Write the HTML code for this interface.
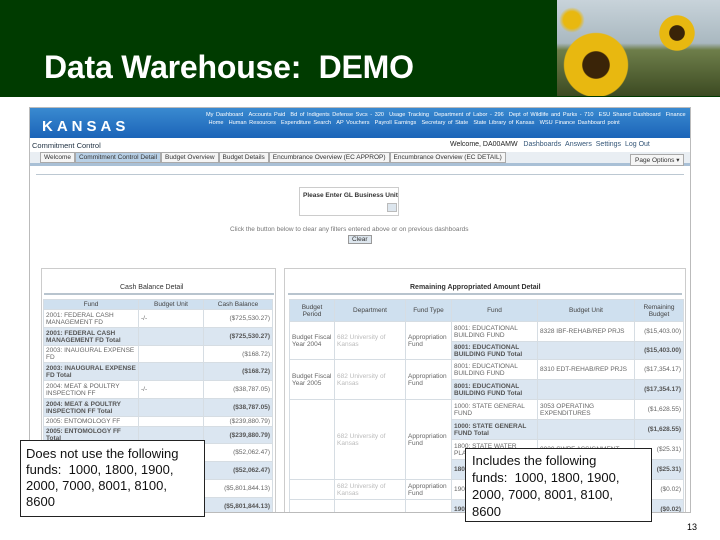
<!DOCTYPE html>
<html><head><meta charset="utf-8"><style>
*{margin:0;padding:0;box-sizing:border-box}
body{width:720px;height:540px;overflow:hidden;background:#fff;position:relative;font-family:"Liberation Sans",sans-serif}
.a{position:absolute}
.hdr{left:0;top:0;width:720px;height:97px;background:#003b00}
.title{left:44px;top:49px;color:#fff;font-size:32px;font-weight:bold;letter-spacing:-0.2px;white-space:nowrap}
.photo{left:557px;top:0;width:163px;height:96px;background:linear-gradient(180deg,#c8d3da 0%,#a9b8c0 45%,#6e7e4a 52%,#3c4a22 100%);overflow:hidden}
.shot{left:29px;top:107px;width:662px;height:406px;border:1px solid #bbb;background:#fff;overflow:hidden}
.ban{left:0;top:0;width:662px;height:30px;background:linear-gradient(180deg,#3a8ad0,#1b64b8)}
.ks{left:12px;top:10px;color:#fff;font-size:15px;font-weight:bold;letter-spacing:4px}
.nav{left:176px;top:3px;width:480px;color:#fff;font-size:5.6px;line-height:8px;word-spacing:1px}
.sm{font-size:7px;color:#333}
table{border-collapse:collapse;font-size:6.5px;color:#666}
td,th{border:1px solid #d6dde3;padding:1px 2px;vertical-align:middle}
th{background:#cfe0ef;font-weight:normal;color:#444;text-align:center}
.b td.h{background:#dbe6f1;color:#555;font-weight:bold}
.r{text-align:right}
.call{background:#fff;border:1px solid #222;font-size:13px;line-height:16px;color:#111;padding:4px 5px}
</style></head><body>
<div class="a hdr"></div>
<div class="a photo">
 <div class="a" style="left:2px;top:30px;width:74px;height:70px;border-radius:50%;background:radial-gradient(circle,#3a2408 0 26%,#e8b810 28% 62%,transparent 64%)"></div>
 <div class="a" style="left:100px;top:12px;width:40px;height:42px;border-radius:50%;background:radial-gradient(circle,#3a2408 0 26%,#e8b810 28% 60%,transparent 62%)"></div>
 <div class="a" style="left:0;top:5px;width:30px;height:30px;background:radial-gradient(circle,#e8b810 0 40%,transparent 60%)"></div>
</div>
<div class="a title">Data Warehouse:&nbsp; DEMO</div>

<div class="a shot">
 <div class="a ban"><div class="a ks">KANSAS</div>
  <div class="a nav">My Dashboard &nbsp;Accounts Paid &nbsp;Bd of Indigents Defense Svcs - 320 &nbsp;Usage Tracking &nbsp;Department of Labor - 296 &nbsp;Dept of Wildlife and Parks - 710 &nbsp;ESU Shared Dashboard &nbsp;Finance &nbsp;Home &nbsp;Human Resources &nbsp;Expenditure Search &nbsp;AP Vouchers &nbsp;Payroll Earnings &nbsp;Secretary of State &nbsp;State Library of Kansas &nbsp;WSU Finance Dashboard point</div></div>
 <div class="a sm" style="left:2px;top:33px;font-size:7.5px;color:#234">Commitment Control</div>
 <div class="a sm" style="left:420px;top:33px;color:#222">Welcome, DA00AMW &nbsp;&nbsp;<span style="color:#357">Dashboards &nbsp;Answers &nbsp;Settings &nbsp;Log Out</span></div>
 <div class="a" style="left:0;top:44px;width:662px;height:14px;background:#e9eef3;border-bottom:3px solid #a9c0d6"></div>
 <div class="a sm" style="left:10px;top:46px;font-size:6.5px;white-space:nowrap">
  <span style="border:1px solid #aaa;padding:1px 3px;background:#f5f5f5">Welcome</span><span style="border:1px solid #aaa;padding:1px 3px;background:#b8d0e6">Commitment Control Detail</span><span style="border:1px solid #aaa;padding:1px 3px;background:#f5f5f5">Budget Overview</span><span style="border:1px solid #aaa;padding:1px 3px;background:#f5f5f5">Budget Details</span><span style="border:1px solid #aaa;padding:1px 3px;background:#f5f5f5">Encumbrance Overview (EC APPROP)</span><span style="border:1px solid #aaa;padding:1px 3px;background:#f5f5f5">Encumbrance Overview (EC DETAIL)</span></div>
 <div class="a sm" style="left:600px;top:46px;border:1px solid #aaa;padding:1px 4px;font-size:6.5px;background:#f5f5f5">Page Options ▾</div>
 <div class="a" style="left:6px;top:66px;width:648px;height:1px;background:#bcc8d2"></div>
 <div class="a" style="left:269px;top:79px;width:100px;height:29px;border:1px solid #ccc"></div>
 <div class="a sm" style="left:273px;top:84px;font-size:6.5px;font-weight:bold">Please Enter GL Business Unit</div>
 <div class="a" style="left:357px;top:95px;width:10px;height:9px;background:#dde6ee;border:1px solid #bbb"></div>
 <div class="a sm" style="left:200px;top:118px;font-size:6.5px;color:#777">Click the button below to clear any filters entered above or on previous dashboards</div>
 <div class="a sm" style="left:318px;top:127px;border:1px solid #999;padding:0 3px;background:#dde6ee;font-size:6.5px">Clear</div>

 <div class="a" style="left:11px;top:160px;width:235px;height:250px;border:1px solid #ccc"></div>
 <div class="a sm" style="left:90px;top:176px;font-size:7px">Cash Balance Detail</div>
 <div class="a" style="left:14px;top:185px;width:230px;height:2px;background:#b8c4ce"></div>
 <table class="a b" style="left:13px;top:191px;width:230px">
  <tr><th style="width:95px">Fund</th><th style="width:65px">Budget Unit</th><th>Cash Balance</th></tr>
  <tr style="height:18px"><td>2001: FEDERAL CASH MANAGEMENT FD</td><td>-/-</td><td class="r">($725,530.27)</td></tr>
  <tr style="height:18px"><td class="h">2001: FEDERAL CASH MANAGEMENT FD Total</td><td class="h"></td><td class="h r">($725,530.27)</td></tr>
  <tr style="height:10px"><td>2003: INAUGURAL EXPENSE FD</td><td></td><td class="r">($168.72)</td></tr>
  <tr style="height:18px"><td class="h">2003: INAUGURAL EXPENSE FD Total</td><td class="h"></td><td class="h r">($168.72)</td></tr>
  <tr style="height:18px"><td>2004: MEAT &amp; POULTRY INSPECTION FF</td><td>-/-</td><td class="r">($38,787.05)</td></tr>
  <tr style="height:18px"><td class="h">2004: MEAT &amp; POULTRY INSPECTION FF Total</td><td class="h"></td><td class="h r">($38,787.05)</td></tr>
  <tr style="height:10px"><td>2005: ENTOMOLOGY FF</td><td></td><td class="r">($239,880.79)</td></tr>
  <tr style="height:10px"><td class="h">2005: ENTOMOLOGY FF Total</td><td class="h"></td><td class="h r">($239,880.79)</td></tr>
  <tr style="height:18px"><td></td><td></td><td class="r">($52,062.47)</td></tr>
  <tr style="height:18px"><td class="h"></td><td class="h"></td><td class="h r">($52,062.47)</td></tr>
  <tr style="height:18px"><td></td><td></td><td class="r">($5,801,844.13)</td></tr>
  <tr style="height:18px"><td class="h"></td><td class="h"></td><td class="h r">($5,801,844.13)</td></tr>
 </table>
 <div class="a" style="left:254px;top:160px;width:402px;height:250px;border:1px solid #ccc"></div>
 <div class="a sm" style="left:380px;top:176px;font-size:7px;font-weight:bold">Remaining Appropriated Amount Detail</div>
 <div class="a" style="left:258px;top:185px;width:394px;height:2px;background:#b8c4ce"></div>
 <table class="a b" style="left:259px;top:191px;width:395px">
  <tr style="height:22px"><th style="width:45px">Budget Period</th><th style="width:71px">Department</th><th style="width:46px">Fund Type</th><th style="width:86px">Fund</th><th style="width:97px">Budget Unit</th><th>Remaining Budget</th></tr>
  <tr style="height:20px"><td rowspan="2">Budget Fiscal Year 2004</td><td rowspan="2" style="color:#bbb">682 University of Kansas</td><td rowspan="2">Appropriation Fund</td><td>8001: EDUCATIONAL BUILDING FUND</td><td>8328 IBF-REHAB/REP PRJS</td><td class="r">($15,403.00)</td></tr>
  <tr style="height:18px"><td class="h">8001: EDUCATIONAL BUILDING FUND Total</td><td class="h"></td><td class="h r">($15,403.00)</td></tr>
  <tr style="height:20px"><td rowspan="2">Budget Fiscal Year 2005</td><td rowspan="2" style="color:#bbb">682 University of Kansas</td><td rowspan="2">Appropriation Fund</td><td>8001: EDUCATIONAL BUILDING FUND</td><td>8310 EDT-REHAB/REP PRJS</td><td class="r">($17,354.17)</td></tr>
  <tr style="height:20px"><td class="h">8001: EDUCATIONAL BUILDING FUND Total</td><td class="h"></td><td class="h r">($17,354.17)</td></tr>
  <tr style="height:20px"><td rowspan="4"></td><td rowspan="4" style="color:#bbb">682 University of Kansas</td><td rowspan="4">Appropriation Fund</td><td>1000: STATE GENERAL FUND</td><td>3053 OPERATING EXPENDITURES</td><td class="r">($1,628.55)</td></tr>
  <tr style="height:20px"><td class="h">1000: STATE GENERAL FUND Total</td><td class="h"></td><td class="h r">($1,628.55)</td></tr>
  <tr style="height:20px"><td>1800: STATE WATER PLAN FUND</td><td>0030 SWPF ASSIGNMENT</td><td class="r">($25.31)</td></tr>
  <tr style="height:20px"><td class="h">1800: FUND Total</td><td class="h"></td><td class="h r">($25.31)</td></tr>
  <tr style="height:20px"><td></td><td style="color:#bbb">682 University of Kansas</td><td>Appropriation Fund</td><td>1900</td><td></td><td class="r">($0.02)</td></tr>
  <tr style="height:20px"><td></td><td></td><td></td><td class="h">1900 Total</td><td class="h"></td><td class="h r">($0.02)</td></tr>
 </table>
</div>

<div class="a call" style="left:20px;top:440px;width:185px;height:77px;padding-top:5px">Does not use the following funds:&nbsp; 1000, 1800, 1900, 2000, 7000, 8001, 8100, 8600</div>
<div class="a call" style="left:465px;top:448px;width:187px;height:74px;padding:3px 14px 0 6px;line-height:17px">Includes the following funds:&nbsp; 1000, 1800, 1900, 2000, 7000, 8001, 8100, 8600</div>
<div class="a" style="left:687px;top:522px;font-size:9px;color:#000">13</div>
</body></html>
